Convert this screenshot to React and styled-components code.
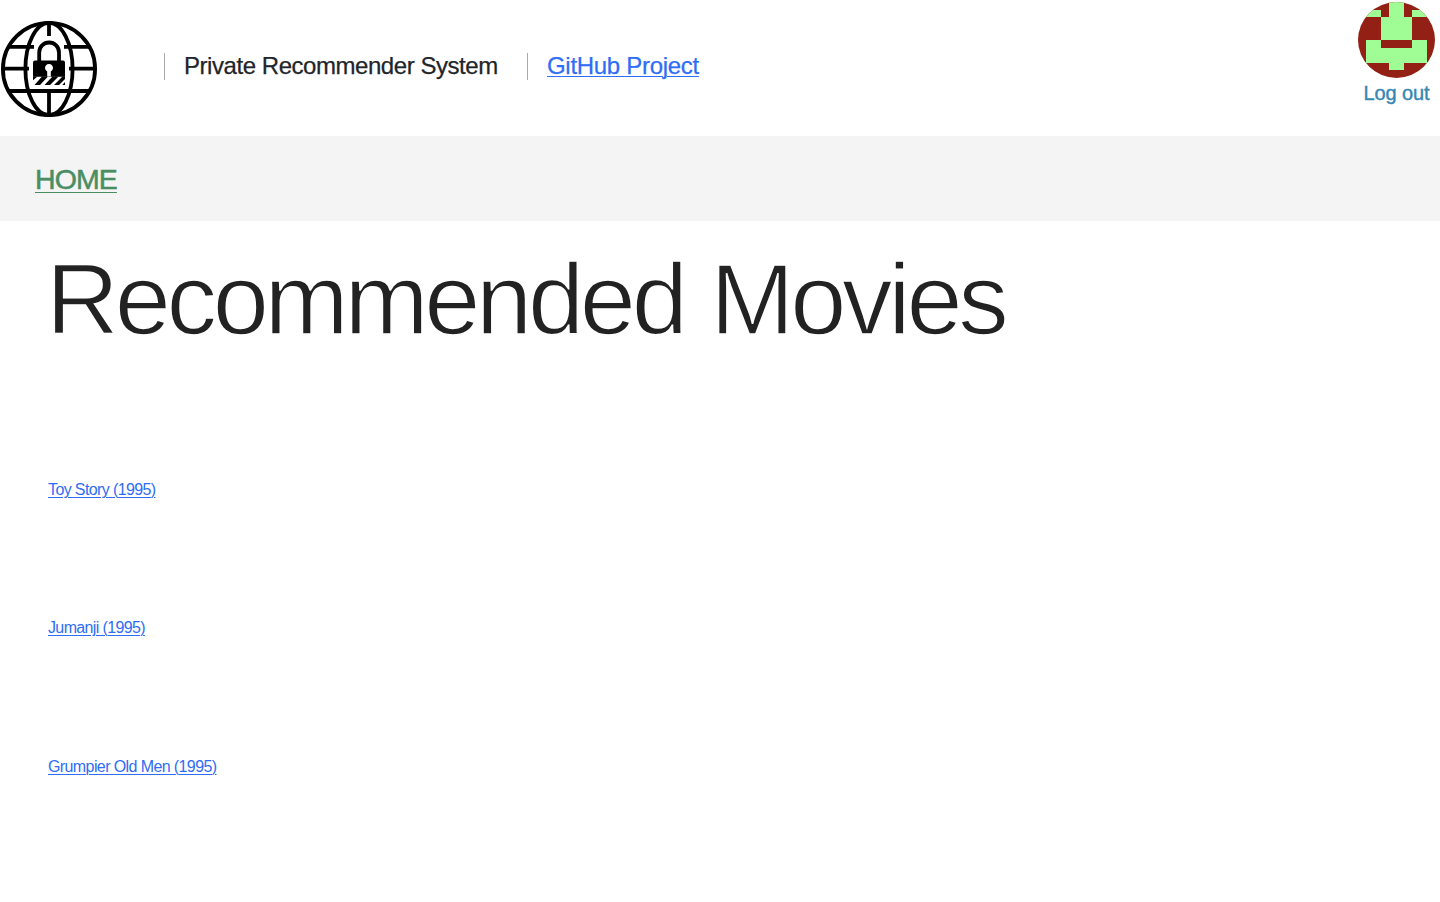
import React from "react";
import styled, { createGlobalStyle } from "styled-components";

const GlobalStyle = createGlobalStyle`
  * { box-sizing: border-box; }
  body {
    margin: 0;
    background: #fff;
    color: #212529;
    font-family: "Liberation Sans", Arial, sans-serif;
  }
`;

const Header = styled.header`
  display: flex;
  align-items: flex-start;
  height: 136px;
`;

const Logo = styled.svg`
  display: block;
  width: 98px;
  height: 98px;
  margin: 20px 66px 0 0;
  flex: none;
`;

const HeaderItem = styled.div`
  height: 27px;
  width: ${(p) => p.$width}px;
  margin-top: 53px;
  padding-left: 19px;
  border-left: 1px solid #a9a9a9;
  font-size: 24px;
  line-height: 25px;
  letter-spacing: ${(p) => p.$spacing}px;
  white-space: nowrap;
  -webkit-text-stroke: 0.25px currentColor;
`;

const Link = styled.a`
  color: #2f6df6;
  text-decoration: underline;
  text-decoration-thickness: 1px;
  text-underline-offset: 2px;
`;

const Account = styled.div`
  display: flex;
  flex-direction: column;
  align-items: center;
  width: 77px;
  margin: 2px 5px 0 auto;
`;

const Avatar = styled.svg`
  display: block;
  width: 77px;
  height: 76px;
  border-radius: 50%;
`;

const LogOut = styled.a`
  margin-top: 4px;
  color: #3787b3;
  font-size: 20px;
  line-height: 23px;
  letter-spacing: -0.1px;
  white-space: nowrap;
  -webkit-text-stroke: 0.4px currentColor;
`;

const NavBar = styled.nav`
  height: 85px;
  padding: 27px 35px 0;
  background: #f4f4f4;
`;

const NavLink = styled(Link)`
  display: block;
  width: max-content;
  color: #4b8d62;
  font-size: 28.5px;
  line-height: 33px;
  letter-spacing: -0.9px;
  text-underline-offset: 3px;
  -webkit-text-stroke: 0.5px currentColor;
`;

const Main = styled.main`
  padding: 0 48px;
`;

const Title = styled.h1`
  margin: 0 0 0 -2px;
  padding-top: 21px;
  color: #222;
  font-size: 101px;
  font-weight: 400;
  line-height: 114px;
  letter-spacing: -4.3px;
  word-spacing: 3px;
  white-space: nowrap;
  -webkit-text-stroke: 1.6px #fff;
`;

const MovieList = styled.ul`
  margin: 0;
  padding: 124px 0 0;
  list-style: none;
`;

const Movie = styled.li`
  height: 138.4px;
  font-size: 16px;
  line-height: 20px;
  letter-spacing: ${(p) => p.$spacing}px;
`;

const movies = [
  { title: "Toy Story (1995)", spacing: -0.62 },
  { title: "Jumanji (1995)", spacing: -0.63 },
  { title: "Grumpier Old Men (1995)", spacing: -0.6 },
];

function GlobeLock() {
  return (
    <Logo viewBox="0 20 98 98" role="img" aria-label="Private Recommender System">
      <g fill="none" stroke="#000" strokeWidth="3.8">
        <circle cx="49" cy="69" r="46.1" />
        <ellipse cx="49" cy="69" rx="23.6" ry="46.1" />
        <path d="M8 46.8H34M64 46.8H90M2 68.7H29M69 68.7H96M8 91H90M49 22V36M49 91V116" />
        <path d="M39.2 62V52.5A9.9 10 0 0 1 59 52.5V62" />
      </g>
      <path d="M35 60.5H63Q65 60.5 65 62.5V76.8H33V62.5Q33 60.5 35 60.5Z" />
      <path d="M33 76.5H37.5L33 80.3ZM42 76.5H48L40 85H34.5ZM52.5 76.5H58.5L50 85H44.5ZM62.5 76.5H65V79L59 85H54ZM65 82V85H62.3Z" />
      <path d="M47.2 71.5A4 4 0 1 1 50.8 71.5V76.5H47.2Z" fill="#fff" />
    </Logo>
  );
}

function Identicon() {
  return (
    <Avatar viewBox="0 0 10 10" preserveAspectRatio="none" shapeRendering="crispEdges">
      <rect width="10" height="10" fill="#922015" />
      <path
        fill="#a0fc95"
        d="M4 0H6V2H7V5H3V2H4ZM0 1H3V2H0ZM7 1H10V2H7ZM1 5H3V6H7V5H9V8H6V9H4V8H1Z"
      />
    </Avatar>
  );
}

export default function App() {
  return (
    <>
      <GlobalStyle />
      <Header>
        <GlobeLock />
        <HeaderItem $width={363} $spacing={-0.45}>Private Recommender System</HeaderItem>
        <HeaderItem $width={180} $spacing={-0.3}>
          <Link href="#project">GitHub Project</Link>
        </HeaderItem>
        <Account>
          <Identicon />
          <LogOut>Log out</LogOut>
        </Account>
      </Header>
      <NavBar>
        <NavLink href="#home">HOME</NavLink>
      </NavBar>
      <Main>
        <Title>Recommended Movies</Title>
        <MovieList>
          {movies.map((m) => (
            <Movie key={m.title} $spacing={m.spacing}>
              <Link href="#movie">{m.title}</Link>
            </Movie>
          ))}
        </MovieList>
      </Main>
    </>
  );
}
